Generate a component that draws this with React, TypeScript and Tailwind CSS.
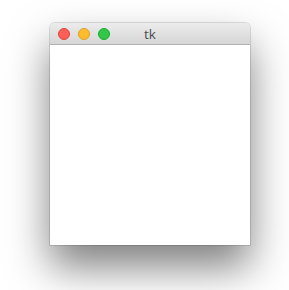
export default function App() {
  return (
    <div className="w-[289px] h-[290px] bg-white pt-[23px] pl-[50px] overflow-hidden">
      {/* window */}
      <div className="w-[200px] flex flex-col rounded-t-[5px] shadow-[0_0_0_1px_rgba(0,0,0,0.12),0_22px_42px_rgba(0,0,0,0.5)]">
        {/* title bar */}
        <div className="relative h-[22px] flex items-center px-[8px] gap-[8px] rounded-t-[5px] bg-gradient-to-b from-[#ececec] to-[#d6d6d6] border-b border-[#b3b3b3]">
          <span className="w-[12px] h-[12px] rounded-full bg-[#fc5f57] border border-[#e0443e]" />
          <span className="w-[12px] h-[12px] rounded-full bg-[#fdbc2e] border border-[#dea123]" />
          <span className="w-[12px] h-[12px] rounded-full bg-[#33c748] border border-[#1aab29]" />
          <span className="absolute inset-0 flex items-center justify-center pt-[1px] text-[13.5px] text-[#4a4d52] font-['Open_Sans','Liberation_Sans',sans-serif]">
            tk
          </span>
        </div>
        {/* content */}
        <div className="h-[200px] bg-white" />
      </div>
    </div>
  );
}
